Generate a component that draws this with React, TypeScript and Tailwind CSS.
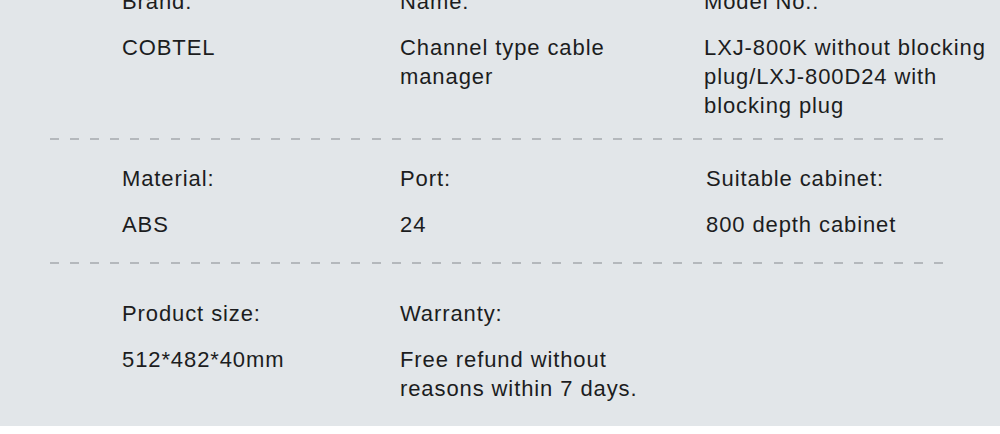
export default function App() {
  const font = { fontFamily: '"Liberation Sans", Arial, sans-serif' };
  const Divider = () => (
    <div className="ml-[50px] h-[2px] w-[894px] bg-[repeating-linear-gradient(to_right,#b4b8bc_0px,#b4b8bc_9px,transparent_9px,transparent_20.1px)]" />
  );
  const Cell = ({ label, value, cls = "" }: { label: string; value: string; cls?: string }) => (
    <div className={"flex flex-col gap-[17px] " + cls}>
      <div>{label}</div>
      <div>{value}</div>
    </div>
  );
  return (
    <div
      className="h-[426px] w-[1000px] overflow-hidden bg-[#e2e6e9] text-[22px] leading-[29px] tracking-[0.9px] text-[#1c1d1e]"
      style={font}
    >
      <div className="-mt-[13px] grid grid-cols-[278px_304px_296px] pb-[18px] pl-[122px]">
        <Cell label="Brand:" value="COBTEL" />
        <Cell label="Name:" value="Channel type cable manager" cls="pr-[20px]" />
        <Cell label="Model No.:" value="LXJ-800K without blocking plug/LXJ-800D24 with blocking plug" />
      </div>
      <Divider />
      <div className="grid grid-cols-[278px_304px_296px] pb-[23px] pl-[122px] pt-[24px]">
        <Cell label="Material:" value="ABS" />
        <Cell label="Port:" value="24" />
        <Cell label="Suitable cabinet:" value="800 depth cabinet" cls="pl-[2px]" />
      </div>
      <Divider />
      <div className="grid grid-cols-[278px_304px_296px] pl-[122px] pt-[35px]">
        <Cell label="Product size:" value="512*482*40mm" />
        <Cell label="Warranty:" value="Free refund without reasons within 7 days." cls="pr-[20px]" />
      </div>
    </div>
  );
}
